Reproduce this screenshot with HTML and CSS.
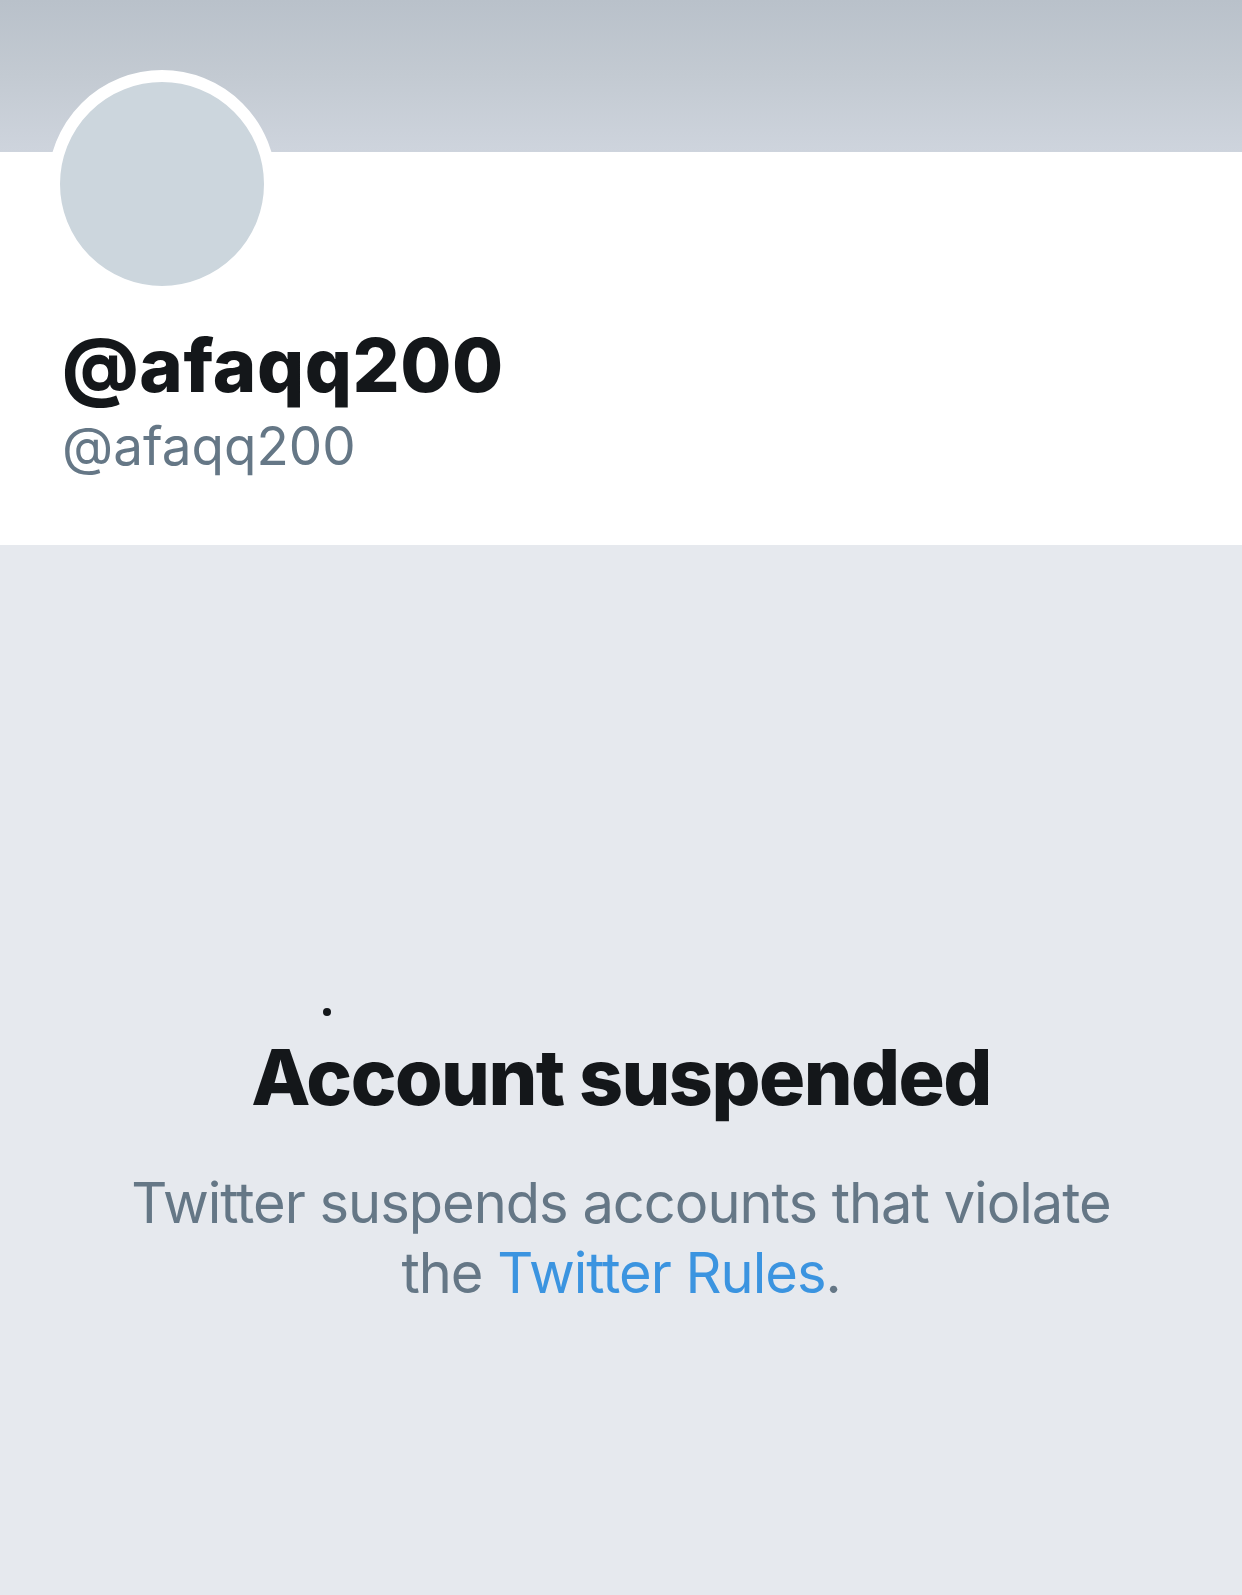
FILE: index.html
```html
<!DOCTYPE html>
<html lang="en">
<head>
<meta charset="utf-8">
<title>@afaqq200</title>
<link rel="stylesheet" href="styles.css">
</head>
<body>
<div class="page">
  <div class="banner"></div>
  <section class="profile">
    <div class="avatar"></div>
    <h1 class="name">@afaqq200</h1>
    <div class="handle">@afaqq200</div>
  </section>
  <section class="suspended">
    <div class="dot"></div>
    <h2 class="title">Account suspended</h2>
    <p class="desc">Twitter suspends accounts that violate the <a class="link" href="#">Twitter Rules</a>.</p>
  </section>
</div>
</body>
</html>
```
FILE: styles.css
```css
html, body {
  margin: 0;
  padding: 0;
}
body {
  font-family: Inter, "Noto Sans", "Liberation Sans", sans-serif;
  background: #e6e9ee;
}
.page {
  width: 1242px;
  height: 1595px;
  display: flex;
  flex-direction: column;
  overflow: hidden;
}
.banner {
  height: 152px;
  flex: none;
  background: linear-gradient(180deg, #b9c1ca 0%, #c3cad2 50%, #ced4dd 100%);
}
.profile {
  flex: none;
  height: 393px;
  background: #ffffff;
  padding-left: 62px;
  box-sizing: border-box;
}
.avatar {
  width: 204px;
  height: 204px;
  border: 12px solid #ffffff;
  border-radius: 50%;
  background: #ccd6dd;
  margin-top: -82px;
  margin-left: -14px;
}
.name {
  margin: 27px 0 0 0;
  font-size: 74px;
  font-weight: 800;
  line-height: 80px;
  color: #14171a;
  letter-spacing: 0.6px;
}
.handle {
  margin-top: 9px;
  font-size: 53px;
  line-height: 64px;
  color: #657786;
}
.suspended {
  flex: 1;
  display: flex;
  flex-direction: column;
  align-items: center;
  padding-top: 463px;
  box-sizing: border-box;
}
.dot {
  width: 8px;
  height: 8px;
  border-radius: 50%;
  background: #14171a;
  align-self: flex-start;
  margin-left: 323px;
}
.title {
  margin: 16px 0 0 0;
  font-size: 77px;
  font-weight: 800;
  line-height: 90px;
  color: #14171a;
  letter-spacing: -1.55px;
}
.desc {
  margin: 46px 0 0 0;
  width: 1060px;
  text-align: center;
  font-size: 56px;
  line-height: 70px;
  color: #657786;
  letter-spacing: -1px;
}
.link {
  color: #3b94e0;
  text-decoration: none;
}
```
